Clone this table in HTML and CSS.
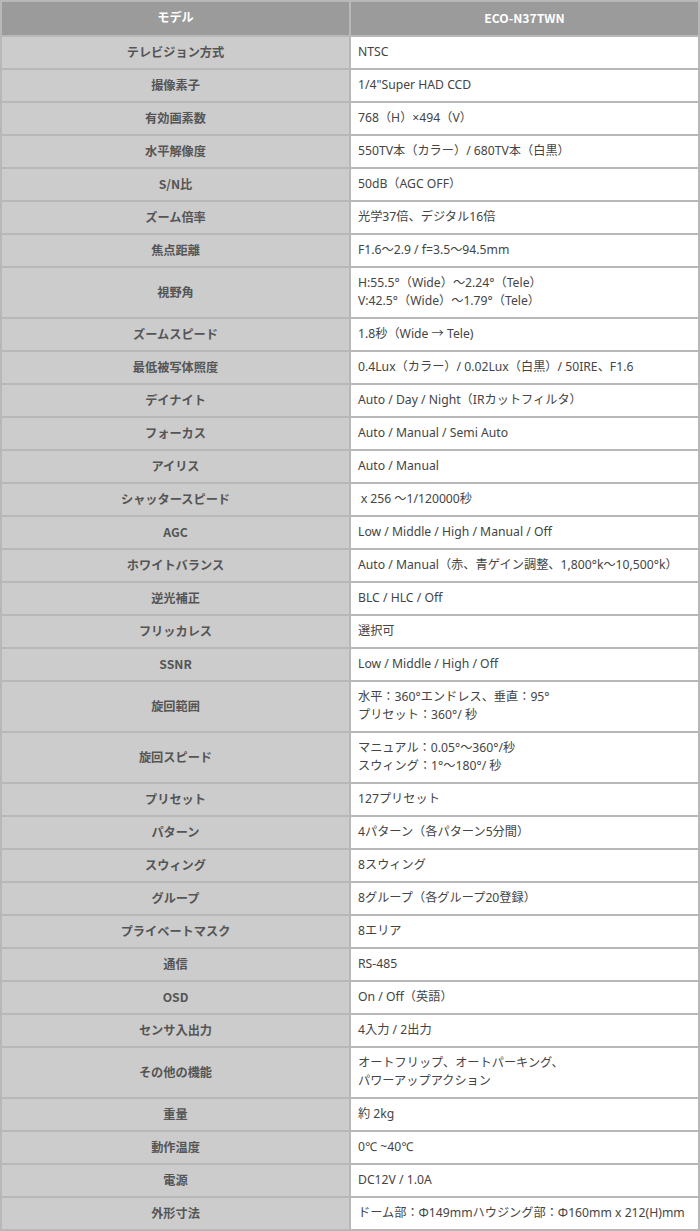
FILE: index.html
```html
<!DOCTYPE html>
<html lang="ja">
<head>
<meta charset="utf-8">
<link rel="stylesheet" href="styles.css">
</head>
<body>
<table class="spec">
<thead>
<tr><th class="h-left">モデル</th><th class="h-right">ECO-N37TWN</th></tr>
</thead>
<tbody>
<tr><th>テレビジョン方式</th><td>NTSC</td></tr>
<tr><th>撮像素子</th><td>1/4"Super HAD CCD</td></tr>
<tr><th>有効画素数</th><td>768（H）×494（V）</td></tr>
<tr><th>水平解像度</th><td>550TV本（カラー）/ 680TV本（白黒）</td></tr>
<tr><th>S/N比</th><td>50dB（AGC OFF）</td></tr>
<tr><th>ズーム倍率</th><td>光学37倍、デジタル16倍</td></tr>
<tr><th>焦点距離</th><td>F1.6～2.9 / f=3.5～94.5mm</td></tr>
<tr><th>視野角</th><td>H:55.5°（Wide）～2.24°（Tele）<br>V:42.5°（Wide）～1.79°（Tele）</td></tr>
<tr><th>ズームスピード</th><td>1.8秒（Wide → Tele)</td></tr>
<tr><th>最低被写体照度</th><td>0.4Lux（カラー）/ 0.02Lux（白黒）/ 50IRE、F1.6</td></tr>
<tr><th>デイナイト</th><td>Auto / Day / Night（IRカットフィルタ）</td></tr>
<tr><th>フォーカス</th><td>Auto / Manual / Semi Auto</td></tr>
<tr><th>アイリス</th><td>Auto / Manual</td></tr>
<tr><th>シャッタースピード</th><td>ｘ256 ～1/120000秒</td></tr>
<tr><th>AGC</th><td>Low / Middle / High / Manual / Off</td></tr>
<tr><th>ホワイトバランス</th><td>Auto / Manual（赤、青ゲイン調整、1,800°k～10,500°k）</td></tr>
<tr><th>逆光補正</th><td>BLC / HLC / Off</td></tr>
<tr><th>フリッカレス</th><td>選択可</td></tr>
<tr><th>SSNR</th><td>Low / Middle / High / Off</td></tr>
<tr><th>旋回範囲</th><td>水平：360°エンドレス、垂直：95°<br>プリセット：360°/ 秒</td></tr>
<tr><th>旋回スピード</th><td>マニュアル：0.05°～360°/秒<br>スウィング：1°～180°/ 秒</td></tr>
<tr><th>プリセット</th><td>127プリセット</td></tr>
<tr><th>パターン</th><td>4パターン（各パターン5分間）</td></tr>
<tr><th>スウィング</th><td>8スウィング</td></tr>
<tr><th>グループ</th><td>8グループ（各グループ20登録）</td></tr>
<tr><th>プライベートマスク</th><td>8エリア</td></tr>
<tr><th>通信</th><td>RS-485</td></tr>
<tr><th>OSD</th><td>On / Off（英語）</td></tr>
<tr><th>センサ入出力</th><td>4入力 / 2出力</td></tr>
<tr><th>その他の機能</th><td>オートフリップ、オートパーキング、<br>パワーアップアクション</td></tr>
<tr><th>重量</th><td>約 2kg</td></tr>
<tr><th>動作温度</th><td>0℃ ~40℃</td></tr>
<tr><th>電源</th><td>DC12V / 1.0A</td></tr>
<tr><th>外形寸法</th><td>ドーム部：Φ149mmハウジング部：Φ160mm x 212(H)mm</td></tr>
</tbody>
</table>
</body>
</html>
```
FILE: styles.css
```css
html, body {
  margin: 0;
  padding: 0;
  background: #ffffff;
}
body {
  font-family: "Noto Sans", "Noto Sans CJK JP", sans-serif;
  font-size: 12.2px;
  color: #444444;
}
.spec {
  width: 700px;
  border-collapse: collapse;
  table-layout: fixed;
}
.spec th,
.spec td {
  border: 2px solid #b8b8b8;
  line-height: 18px;
  padding: 6px 7px 7px 7px;
  vertical-align: middle;
}
.spec thead th {
  background: #9b9b9b;
  color: #ffffff;
  font-weight: bold;
  text-align: center;
  height: 20px;
  padding-top: 6px;
  padding-bottom: 7px;
}
.spec thead .h-right {
  font-family: "Noto Sans CJK JP", sans-serif;
}
.spec .h-left {
  width: 333px;
}
.spec tbody th {
  background: #cccccc;
  color: #555555;
  font-weight: bold;
  text-align: center;
  font-family: "Noto Sans CJK JP", sans-serif;
}
.spec tbody td {
  background: #ffffff;
  color: #444444;
  text-align: left;
}
```
